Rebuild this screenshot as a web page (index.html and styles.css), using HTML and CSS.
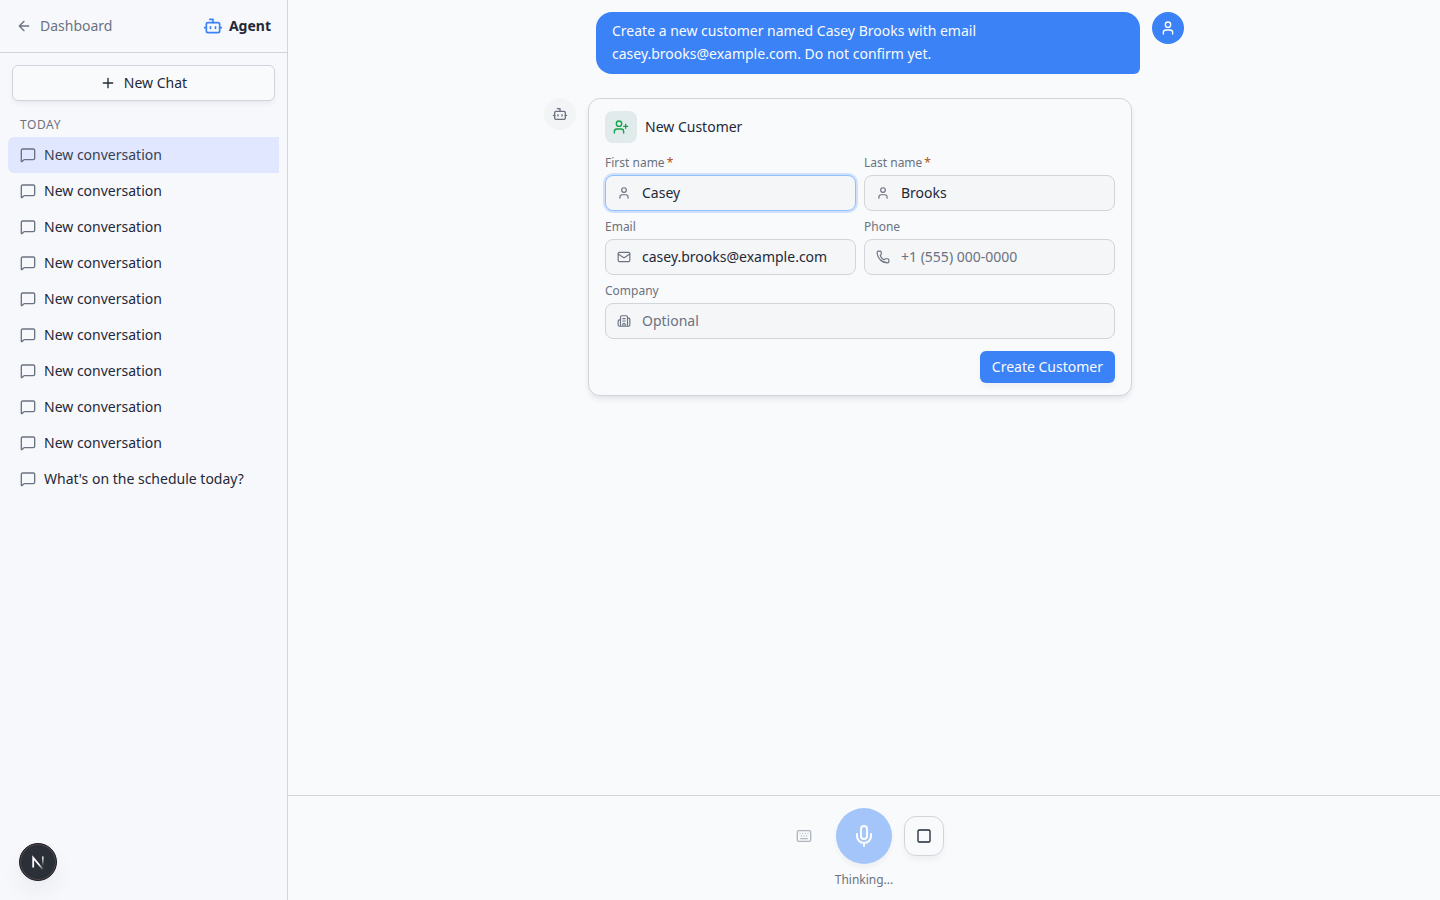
FILE: index.html
```html
<!DOCTYPE html>
<html lang="en">
<head>
<meta charset="utf-8">
<title>Agent</title>
<link rel="stylesheet" href="styles.css">
</head>
<body>
<svg class="defs" aria-hidden="true">
  <symbol id="bot" viewBox="0 0 24 24"><path d="M12 8V4H8"/><rect width="16" height="12" x="4" y="8" rx="2"/><path d="M2 14h2M20 14h2M15 13v2M9 13v2"/></symbol>
  <symbol id="user" viewBox="0 0 24 24"><path d="M19 21v-2a4 4 0 0 0-4-4H9a4 4 0 0 0-4 4v2"/><circle cx="12" cy="7" r="4"/></symbol>
  <symbol id="msg" viewBox="0 0 24 24"><path d="M22 17a2 2 0 0 1-2 2H6.828a2 2 0 0 0-1.414.586l-2.202 2.202A.71.71 0 0 1 2 21.286V5a2 2 0 0 1 2-2h16a2 2 0 0 1 2 2z"/></symbol>
</svg>
<div class="app">
  <aside class="sidebar">
    <header class="side-head">
      <a class="back"><svg class="icon i16" viewBox="0 0 24 24"><path d="m12 19-7-7 7-7M19 12H5"/></svg>Dashboard</a>
      <div class="brand"><svg class="icon i20"><use href="#bot"/></svg>Agent</div>
    </header>
    <div class="new-wrap"><button class="new-chat"><svg class="icon i16" viewBox="0 0 24 24"><path d="M5 12h14M12 5v14"/></svg>New Chat</button></div>
    <nav class="history">
      <div class="group">TODAY</div>
      <a class="item active"><svg class="icon i16"><use href="#msg"/></svg>New conversation</a>
      <a class="item"><svg class="icon i16"><use href="#msg"/></svg>New conversation</a>
      <a class="item"><svg class="icon i16"><use href="#msg"/></svg>New conversation</a>
      <a class="item"><svg class="icon i16"><use href="#msg"/></svg>New conversation</a>
      <a class="item"><svg class="icon i16"><use href="#msg"/></svg>New conversation</a>
      <a class="item"><svg class="icon i16"><use href="#msg"/></svg>New conversation</a>
      <a class="item"><svg class="icon i16"><use href="#msg"/></svg>New conversation</a>
      <a class="item"><svg class="icon i16"><use href="#msg"/></svg>New conversation</a>
      <a class="item"><svg class="icon i16"><use href="#msg"/></svg>New conversation</a>
      <a class="item"><svg class="icon i16"><use href="#msg"/></svg>What's on the schedule today?</a>
    </nav>
  </aside>
  <main class="main">
    <section class="thread">
      <div class="row user-row">
        <div class="bubble">Create a new customer named Casey Brooks with email casey.brooks@example.com. Do not confirm yet.</div>
        <div class="avatar avatar-user"><svg class="icon i16"><use href="#user"/></svg></div>
      </div>
      <div class="row">
        <div class="avatar avatar-bot"><svg class="icon i16"><use href="#bot"/></svg></div>
        <form class="card">
          <div class="card-head">
            <span class="badge"><svg class="icon i16" viewBox="0 0 24 24"><path d="M16 21v-2a4 4 0 0 0-4-4H6a4 4 0 0 0-4 4v2"/><circle cx="9" cy="7" r="4"/><path d="M19 8v6M22 11h-6"/></svg></span>
            New Customer
          </div>
          <div class="fields">
            <div class="field"><span class="label">First name<i class="req">*</i></span><div class="control focused"><svg class="icon i14"><use href="#user"/></svg><input class="input" value="Casey"></div></div>
            <div class="field"><span class="label">Last name<i class="req">*</i></span><div class="control"><svg class="icon i14"><use href="#user"/></svg><input class="input" value="Brooks"></div></div>
            <div class="field"><span class="label">Email</span><div class="control"><svg class="icon i14" viewBox="0 0 24 24"><path d="m22 7-8.991 5.727a2 2 0 0 1-2.009 0L2 7"/><rect x="2" y="4" width="20" height="16" rx="2"/></svg><input class="input" value="casey.brooks@example.com"></div></div>
            <div class="field"><span class="label">Phone</span><div class="control"><svg class="icon i14" viewBox="0 0 24 24"><path d="M13.832 16.568a1 1 0 0 0 1.213-.303l.355-.465A2 2 0 0 1 17 15h3a2 2 0 0 1 2 2v3a2 2 0 0 1-2 2A18 18 0 0 1 2 4a2 2 0 0 1 2-2h3a2 2 0 0 1 2 2v3a2 2 0 0 1-.8 1.6l-.468.351a1 1 0 0 0-.292 1.233 14 14 0 0 0 6.392 6.384"/></svg><input class="input" placeholder="+1 (555) 000-0000"></div></div>
            <div class="field wide"><span class="label">Company</span><div class="control"><svg class="icon i14" viewBox="0 0 24 24"><path d="M10 12h4M10 8h4M14 21v-3a2 2 0 0 0-4 0v3M6 10H4a2 2 0 0 0-2 2v7a2 2 0 0 0 2 2h16a2 2 0 0 0 2-2V9a2 2 0 0 0-2-2h-2M6 21V5a2 2 0 0 1 2-2h8a2 2 0 0 1 2 2v16"/></svg><input class="input" placeholder="Optional"></div></div>
          </div>
          <div class="actions"><button type="button" class="create">Create Customer</button></div>
        </form>
      </div>
    </section>
    <footer class="composer">
      <div class="controls">
        <span class="keyboard"><svg class="icon i16" viewBox="0 0 24 24"><path d="M10 8h.01M12 12h.01M14 8h.01M16 12h.01M18 8h.01M6 8h.01M7 16h10M8 12h.01"/><rect width="20" height="16" x="2" y="4" rx="2"/></svg></span>
        <span class="mic"><svg class="icon i24" viewBox="0 0 24 24"><path d="M12 19v3M19 10v2a7 7 0 0 1-14 0v-2"/><rect x="9" y="2" width="6" height="13" rx="3"/></svg></span>
        <span class="stop"><svg class="icon i16" viewBox="0 0 24 24"><rect width="18" height="18" x="3" y="3" rx="2"/></svg></span>
      </div>
      <div class="status">Thinking...</div>
    </footer>
  </main>
</div>
<div class="dev-badge">
  <svg class="dev-logo" viewBox="0 0 40 40" fill="none">
    <defs>
      <linearGradient id="stem" x1="26" y1="13" x2="26" y2="25" gradientUnits="userSpaceOnUse"><stop stop-color="#fff"/><stop offset="1" stop-color="#fff" stop-opacity="0"/></linearGradient>
      <linearGradient id="diag" x1="22" y1="22" x2="27" y2="29" gradientUnits="userSpaceOnUse"><stop stop-color="#fff"/><stop offset="1" stop-color="#fff" stop-opacity="0.1"/></linearGradient>
    </defs>
    <path d="M14 27V14.5L26 29" stroke="url(#diag)" stroke-width="2.2"/>
    <path d="M26 13v12" stroke="url(#stem)" stroke-width="2"/>
  </svg>
</div>
</body>
</html>
```

FILE: styles.css
```css
* { box-sizing: border-box; }
body { margin: 0; font: 14px/20px "Noto Sans", sans-serif; color: #1f2937; background: #f9fafc; }
button, input { font: inherit; color: inherit; }
.defs { position: absolute; width: 0; height: 0; }
.icon { fill: none; stroke: currentColor; stroke-width: 2; stroke-linecap: round; stroke-linejoin: round; flex: none; }
.i14 { width: 14px; height: 14px; }
.i16 { width: 16px; height: 16px; }
.i20 { width: 20px; height: 20px; }
.i24 { width: 24px; height: 24px; }
.app { display: flex; height: 100vh; overflow: hidden; }

.sidebar { width: 288px; flex: none; background: #f7f8fc; border-right: 1px solid #d1d5db; }
.side-head { display: flex; align-items: center; justify-content: space-between; height: 53px; padding: 0 16px; border-bottom: 1px solid #d1d5db; }
.back { display: flex; align-items: center; gap: 8px; color: #6b7280; }
.brand { display: flex; align-items: center; gap: 6px; font-weight: 700; }
.brand .icon { color: #3b82f6; }
.new-wrap { padding: 12px; }
.new-chat { display: flex; align-items: center; justify-content: center; gap: 8px; width: 100%; height: 36px; padding: 0; background: #f9fafc; border: 1px solid #d1d5db; border-radius: 6px; box-shadow: 0 4px 6px -1px rgba(31, 41, 55, .05), 0 2px 4px -2px rgba(31, 41, 55, .04); }
.history { padding: 0 8px; }
.group { padding: 4px 12px; font-size: 12px; line-height: 16px; letter-spacing: .6px; color: #6b7280; }
.item { display: flex; align-items: center; gap: 8px; height: 36px; padding: 0 12px; }
.item .icon { color: #6b7280; }
.item.active { background: #e0e7ff; color: #374151; border-radius: 6px 0 0 6px; }

.main { flex: 1; display: flex; flex-direction: column; min-width: 0; }
.thread { flex: 1; display: flex; flex-direction: column; gap: 24px; width: 640px; margin: 0 auto; padding-top: 12px; }
.row { display: flex; align-items: flex-start; gap: 12px; }
.user-row { justify-content: flex-end; }
.bubble { width: 544px; padding: 8px 16px; line-height: 22.75px; color: #f9fafc; background: #3b82f6; border-radius: 16px 16px 6px 16px; }
.avatar { display: flex; align-items: center; justify-content: center; flex: none; width: 32px; height: 32px; border-radius: 50%; }
.avatar-user { background: #3b82f6; color: #fff; }
.avatar-bot { background: #f3f4f6; color: #6b7280; }
.card { width: 544px; padding: 12px 16px; background: #f9fafc; border: 1px solid #d1d5db; border-radius: 12px; box-shadow: 0 4px 6px -1px rgba(31, 41, 55, .09), 0 2px 4px -2px rgba(31, 41, 55, .06); }
.card-head { display: flex; align-items: center; gap: 8px; margin-bottom: 12px; }
.badge { display: flex; align-items: center; justify-content: center; width: 32px; height: 32px; border-radius: 8px; background: #e1ebeb; color: #16a34a; }
.fields { display: grid; grid-template-columns: 1fr 1fr; gap: 8px; }
.wide { grid-column: 1 / -1; }
.label { display: block; margin-bottom: 4px; font-size: 12px; line-height: 16px; color: #6b7280; }
.req { margin-left: 2px; font-style: normal; color: #b45309; }
.control { display: flex; align-items: center; gap: 11px; height: 36px; padding: 0 11px; background: #f5f6f8; border: 1px solid #d1d5db; border-radius: 8px; color: #6b7280; }
.focused { border-color: #93c0fb; box-shadow: 0 0 0 2px #cfe1fc; }
.input { flex: 1; min-width: 0; padding: 0; border: 0; outline: 0; background: none; color: #1f2937; }
.input::placeholder { color: #6b7280; opacity: 1; }
.actions { display: flex; justify-content: flex-end; margin-top: 12px; }
.create { height: 32px; padding: 0 12px; border: 0; border-radius: 6px; color: #f9fafc; background: #3b82f6; box-shadow: 0 4px 6px -1px rgba(31, 41, 55, .06); }

.composer { height: 105px; padding-top: 12px; border-top: 1px solid #d1d5db; }
.controls { display: flex; align-items: center; justify-content: center; gap: 12px; }
.keyboard, .stop { display: flex; align-items: center; justify-content: center; width: 40px; height: 40px; }
.keyboard { color: #6b7280; opacity: .5; }
.mic { display: flex; align-items: center; justify-content: center; width: 56px; height: 56px; border-radius: 50%; color: #fcfcfe; background: #a3c5fa; box-shadow: 0 4px 6px -1px rgba(31, 41, 55, .06); }
.stop { border: 1px solid #d1d5db; border-radius: 12px; box-shadow: 0 4px 6px -1px rgba(31, 41, 55, .06); }
.status { margin-top: 8px; text-align: center; font-size: 12px; line-height: 16px; color: #6b7280; }

.dev-badge { position: fixed; left: 19px; top: 843px; display: flex; align-items: center; justify-content: center; width: 38px; height: 38px; border-radius: 50%; background: #2b2f38; border: 1px solid #1c1d22; box-shadow: inset 0 0 0 1px #55474f, 0 12px 24px -4px rgba(31, 41, 55, .09); }
.dev-logo { width: 32px; height: 32px; }
```
